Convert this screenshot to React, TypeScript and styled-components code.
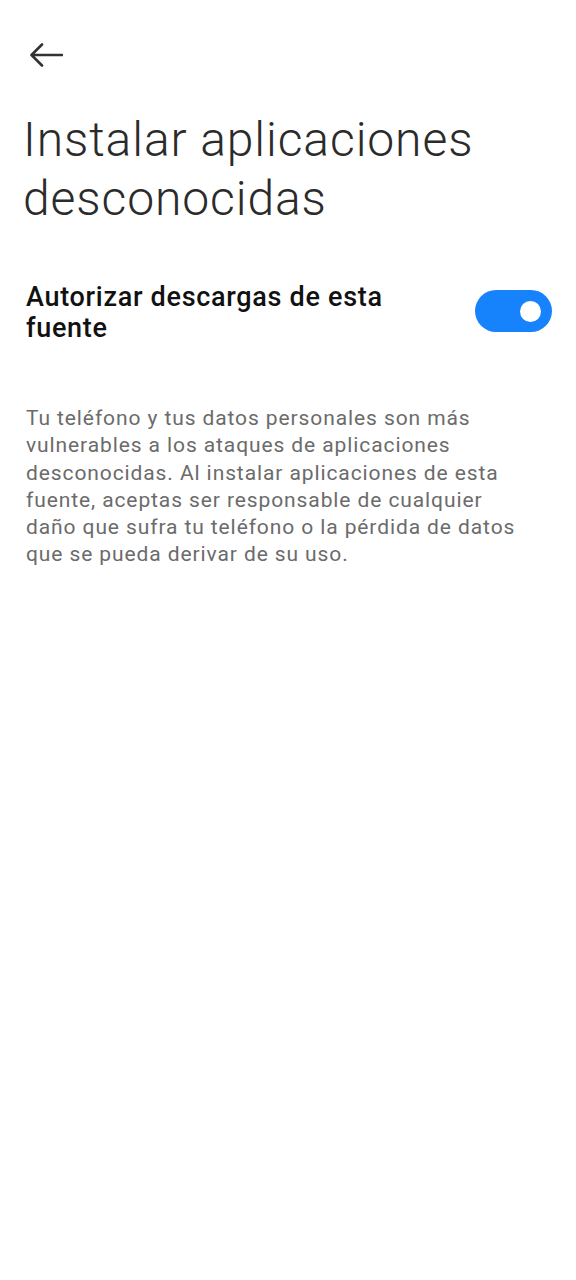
import React from "react";
import styled, { createGlobalStyle } from "styled-components";

const Global = createGlobalStyle`
  html, body { margin: 0; padding: 0; background: #ffffff; }
  body { font-family: Roboto, "Noto Sans", sans-serif; -webkit-font-smoothing: antialiased; }
  * { box-sizing: border-box; }
`;

const Page = styled.div`
  width: 576px;
  min-height: 1280px;
  background: #ffffff;
  display: flex;
  flex-direction: column;
`;

const TopBar = styled.div`
  height: 110px;
  padding: 33px 0 0 28px;
  display: flex;
  align-items: flex-start;
`;

const BackButton = styled.button`
  border: 0;
  background: transparent;
  padding: 0;
  width: 36px;
  height: 44px;
  display: flex;
  align-items: center;
  justify-content: center;
  cursor: pointer;
`;

const Title = styled.h1`
  margin: 0;
  padding: 0 20px 0 23px;
  font-family: Roboto, sans-serif;
  font-weight: 300;
  font-size: 48px;
  line-height: 59px;
  color: #2b2b2b;
  letter-spacing: 0.9px;
`;

const SettingRow = styled.div`
  margin-top: 54px;
  padding: 0 24px 0 26px;
  display: flex;
  align-items: flex-start;
  justify-content: space-between;
  gap: 20px;
`;

const SettingLabel = styled.div`
  font-family: Roboto, sans-serif;
  font-weight: 500;
  font-size: 27px;
  line-height: 31px;
  color: #111111;
  letter-spacing: 0.7px;
  max-width: 400px;
`;

const Toggle = styled.div<{ $on: boolean }>`
  flex: none;
  margin-top: 8px;
  width: 77px;
  height: 42px;
  border-radius: 21px;
  background: ${(p) => (p.$on ? "#1682fb" : "#d6d6d6")};
  display: flex;
  align-items: center;
  justify-content: ${(p) => (p.$on ? "flex-end" : "flex-start")};
  padding: 0 11px;
`;

const Knob = styled.span`
  width: 21px;
  height: 21px;
  border-radius: 50%;
  background: #ffffff;
`;

const Description = styled.p`
  margin: 61px 0 0;
  padding: 0 50px 0 26px;
  font-family: Roboto, sans-serif;
  font-weight: 400;
  font-size: 21px;
  line-height: 27.3px;
  letter-spacing: 0.9px;
  color: #6b6b6b;
`;

export default function App() {
  return (
    <Page>
      <Global />
      <TopBar>
        <BackButton aria-label="Atrás">
          <svg width="34" height="24" viewBox="0 0 34 24" fill="none">
            <path
              d="M33 12H3M13 1.5L2.5 12L13 22.5"
              stroke="#333333"
              strokeWidth="2.6"
              strokeLinecap="round"
              strokeLinejoin="round"
            />
          </svg>
        </BackButton>
      </TopBar>
      <Title>Instalar aplicaciones desconocidas</Title>
      <SettingRow>
        <SettingLabel>Autorizar descargas de esta fuente</SettingLabel>
        <Toggle $on={true}>
          <Knob />
        </Toggle>
      </SettingRow>
      <Description>
        Tu teléfono y tus datos personales son más vulnerables a los ataques de aplicaciones
        desconocidas. Al instalar aplicaciones de esta fuente, aceptas ser responsable de
        cualquier daño que sufra tu teléfono o la pérdida de datos que se pueda derivar de su uso.
      </Description>
    </Page>
  );
}
